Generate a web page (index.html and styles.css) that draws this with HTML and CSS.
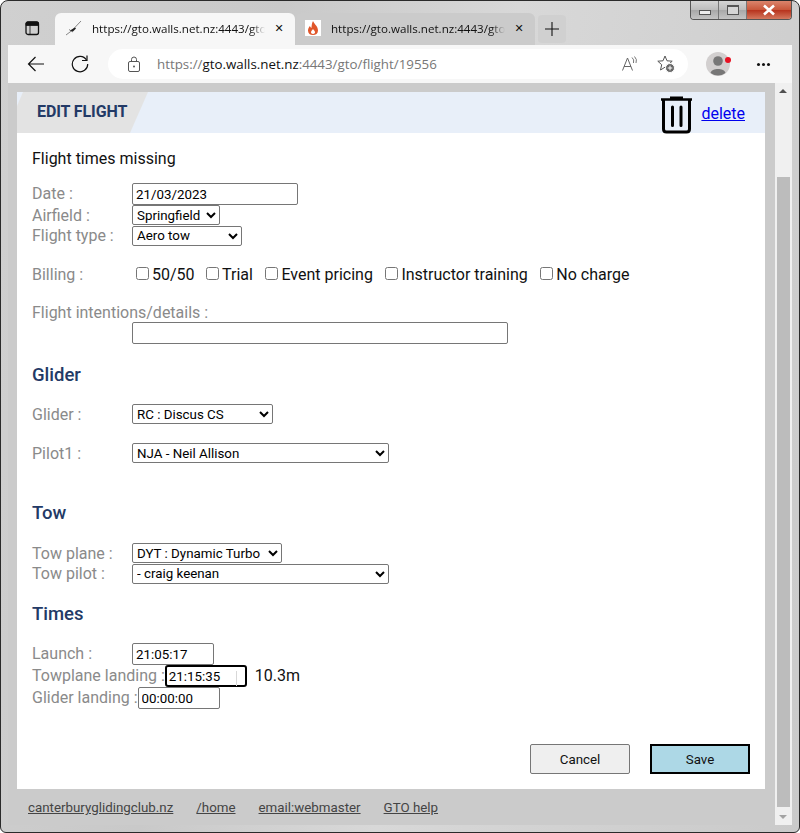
FILE: index.html
```html
<!DOCTYPE html>
<html lang="en">
<head>
    <meta charset="UTF-8">
    <title>Edit flight</title>
    <link rel="stylesheet" href="styles.css">
</head>
<body>
<div class="window">
    <div class="caption-btns">
        <span class="cap-btn"><i class="cap-min"></i></span>
        <span class="cap-btn"><i class="cap-max"></i></span>
        <span class="cap-btn cap-close">
            <svg width="16" height="12" viewBox="0 0 16 12"><path d="M3 1.500 L13 10.500 M13 1.500 L3 10.500" stroke="#fff" stroke-width="2.600" fill="none"/></svg>
        </span>
    </div>

    <div class="tabstrip">
        <span class="tab-toggle">
            <svg width="16" height="16" viewBox="0 0 16 16"><rect x="2" y="2" width="12.500" height="12.500" rx="2" fill="none" stroke="#111" stroke-width="1.300"/><path d="M2 3.500 Q2 2 3.500 2 H13 Q14.500 2 14.500 3.500 V5.500 H2 Z M6 5.500 V14" fill="#111" stroke="#111" stroke-width="0.800"/></svg>
        </span>
        <div class="tab tab-active">
            <svg class="favicon" width="18" height="18" viewBox="0 0 18 18"><path d="M1 16 L7 11.500 L16 2 M8 13 L4 10.500" stroke="#555" stroke-width="0.700" fill="none"/><path d="M5 11.500 L10 8.500 L11 9.500 L8 12.500 Z" fill="#222"/></svg>
            <span class="tab-title">https://gto.walls.net.nz:4443/gto/</span>
            <span class="tab-x">✕</span>
        </div>
        <div class="tab">
            <span class="favicon-box">
                <svg width="14" height="16" viewBox="0 0 14 16"><path d="M7 1 C8 4 12 6 12 10.500 C12 13.500 9.800 15 7 15 C4.200 15 2 13.500 2 10.500 C2 8.500 3 7 4 6 C4.300 7 4.700 7.500 5.500 8 C5.500 5.500 6 3 7 1 Z M7 9 C6 10.500 5 11 5 12.300 C5 13.300 6 14 7 14 C8 14 9 13.300 9 12.300 C9 11 8 10.500 7 9 Z" fill="#e0562a" fill-rule="evenodd"/></svg>
            </span>
            <span class="tab-title">https://gto.walls.net.nz:4443/gtoc</span>
            <span class="tab-x">✕</span>
        </div>
        <span class="tab-new">
            <svg width="14" height="14" viewBox="0 0 14 14"><path d="M7 0 V14 M0 7 H14" stroke="#111" stroke-width="1.100"/></svg>
        </span>
    </div>

    <div class="toolbar">
        <span class="tool-btn">
            <svg width="18" height="18" viewBox="0 0 18 18"><path d="M17 9 H1.500 M8.500 2 L1.500 9 L8.500 16" stroke="#111" stroke-width="1.200" fill="none"/></svg>
        </span>
        <span class="tool-btn">
            <svg width="18" height="18" viewBox="0 0 18 18"><path d="M15.500 5 A7.700 7.700 0 1 0 16.700 9" stroke="#111" stroke-width="1.200" fill="none"/><path d="M16 0.500 V5.500 H11" stroke="#111" stroke-width="1.200" fill="none"/></svg>
        </span>
        <div class="address">
            <svg class="lock" width="14" height="16" viewBox="0 0 14 16"><rect x="1.500" y="5.500" width="11" height="10" rx="1.500" fill="none" stroke="#555"/><path d="M4.500 5.500 V3.500 A2.500 2.500 0 0 1 9.500 3.500 V5.500" fill="none" stroke="#555"/><circle cx="7" cy="10.500" r="1" fill="#555"/></svg>
            <span class="url"><span class="url-dim">https://</span>gto.walls.net.nz<span class="url-dim">:4443/gto/flight/19556</span></span>
            <svg class="read-aloud" width="16" height="16" viewBox="0 0 16 16"><path d="M0.500 14.500 L5.500 2 L10.500 14.500 M2 10.500 H9" stroke="#666" stroke-width="1" fill="none"/><path d="M10 1.500 Q12.500 3.500 11.500 7 M12.500 0.500 Q15.500 3.500 14 7" stroke="#666" stroke-width="0.900" fill="none"/></svg>
            <svg class="fav-add" width="18" height="18" viewBox="0 0 18 18"><path d="M8 1 L10 5.800 L15.200 6.200 L11.300 9.700 L12.500 15 L8 12.200 L3.500 15 L4.700 9.700 L0.800 6.200 L6 5.800 Z" stroke="#555" fill="none" stroke-linejoin="round"/><circle cx="13" cy="13" r="4.500" fill="#666" stroke="#fff"/><path d="M13 10.700 V15.300 M10.700 13 H15.300" stroke="#fff"/></svg>
        </div>
        <span class="avatar">
            <svg width="24" height="24" viewBox="0 0 24 24"><circle cx="12" cy="12" r="12" fill="#d2cfcf"/><circle cx="12" cy="9" r="4.800" fill="#777"/><path d="M4.500 21 C5.500 15.500 18.500 15.500 19.500 21 Q12 26 4.500 21 Z" fill="#777"/></svg>
            <i class="avatar-dot"></i>
        </span>
        <span class="more"><i></i><i></i><i></i></span>
    </div>

    <div class="viewport">
        <div class="page">
            <div class="card">
                <div class="card-head">
                    <div class="head-tab">EDIT FLIGHT</div>
                    <div class="head-actions">
                        <svg class="trash" width="32" height="38" viewBox="0 0 32 38"><path d="M1 3.500 H32" stroke="#000" stroke-width="2.500"/><path d="M11 3 V1.500 H22 V3" stroke="#000" stroke-width="2" fill="#000"/><path d="M3.500 4 V33 Q3.500 36 6.500 36 H26.500 Q29.500 36 29.500 33 V4" stroke="#000" stroke-width="3" fill="none"/><path d="M12.500 11 V29.500 M21 11 V29.500" stroke="#000" stroke-width="3" stroke-linecap="round"/></svg>
                        <a class="delete-link" href="#">delete</a>
                    </div>
                </div>

                <form class="form">
                    <p class="status">Flight times missing</p>

                    <div class="row row-date"><label class="lbl">Date :</label><input class="field w-date" type="text" value="21/03/2023"></div>
                    <div class="row row-select"><label class="lbl">Airfield :</label><select class="pick w-airfield"><option>Springfield</option></select></div>
                    <div class="row row-select"><label class="lbl">Flight type :</label><select class="pick w-type"><option>Aero tow</option></select></div>

                    <div class="row billing">
                        <label class="lbl">Billing :</label>
                        <label class="check"><input type="checkbox">50/50</label>
                        <label class="check"><input type="checkbox">Trial</label>
                        <label class="check"><input type="checkbox">Event pricing</label>
                        <label class="check"><input type="checkbox">Instructor training</label>
                        <label class="check"><input type="checkbox">No charge</label>
                    </div>

                    <div class="intent-label"><label class="lbl">Flight intentions/details :</label></div>
                    <div class="row intent"><input class="field w-intent" type="text"></div>

                    <h3 class="section sec-glider">Glider</h3>
                    <div class="row row-glider"><label class="lbl">Glider :</label><select class="pick w-glider"><option>RC : Discus CS</option></select></div>
                    <div class="row row-pilot"><label class="lbl">Pilot1 :</label><select class="pick w-pilot"><option>NJA - Neil Allison</option></select></div>

                    <h3 class="section sec-tow">Tow</h3>
                    <div class="row row-select"><label class="lbl">Tow plane :</label><select class="pick w-plane"><option>DYT : Dynamic Turbo</option></select></div>
                    <div class="row row-select"><label class="lbl">Tow pilot :</label><select class="pick w-pilot"><option>- craig keenan</option></select></div>

                    <h3 class="section sec-times">Times</h3>
                    <div class="row row-time"><label class="lbl">Launch :</label><input class="field w-time" type="text" value="21:05:17"></div>
                    <div class="row row-time">
                        <label class="lbl">Towplane landing :</label>
                        <span class="focus-wrap">
                            <input class="field w-time is-focus" type="text" value="21:15:35">
                            <i class="ibeam"></i>
                        </span>
                        <span class="elapsed">10.3m</span>
                    </div>
                    <div class="row row-time"><label class="lbl">Glider landing :</label><input class="field w-time" type="text" value="00:00:00"></div>

                    <div class="actions">
                        <button type="button" class="btn">Cancel</button>
                        <button type="button" class="btn btn-save">Save</button>
                    </div>
                </form>
            </div>

            <div class="footer">
                <a href="#">canterburyglidingclub.nz</a>
                <a href="#">/home</a>
                <a href="#">email:webmaster</a>
                <a href="#">GTO help</a>
            </div>
        </div>

        <div class="scrollbar">
            <span class="arrow-up"></span>
            <div class="thumb"></div>
            <span class="arrow-down"></span>
        </div>
    </div>
</div>
</body>
</html>
```

FILE: styles.css
```css
* {
    box-sizing: border-box;
}

html, body {
    margin: 0;
    padding: 0;
    background-color: #fff;
}

body {
    font-family: Roboto, Arial, sans-serif;
}

.window {
    position: relative;
    width: 800px;
    height: 833px;
    padding: 12px 7px 7px 7px;
    border: 1px solid #2a2a2a;
    border-radius: 8px 8px 6px 6px;
    background: linear-gradient(100deg, #d0d0d0 0%, #c9c9c9 30%, #d8d8d8 55%, #cacaca 100%);
    display: flex;
    flex-direction: column;
    overflow: hidden;
}

/* caption buttons */
.caption-btns {
    position: absolute;
    top: -1px;
    right: 7px;
    width: 102px;
    height: 20px;
    display: flex;
    border: 1px solid #555;
    border-top: none;
    border-radius: 0 0 4px 4px;
    overflow: hidden;
}

.cap-btn {
    width: 28px;
    display: flex;
    align-items: center;
    justify-content: center;
    background: linear-gradient(#d8d8d8, #bdbdbd 50%, #a9a9a9 55%, #c4c4c4);
    border-right: 1px solid #777;
}

.cap-min {
    width: 12px;
    height: 5px;
    margin-top: 6px;
    background-color: #eee;
    border: 1px solid #555;
}

.cap-max {
    width: 12px;
    height: 10px;
    border: 1px solid #555;
    border-top-width: 2px;
    background-color: #d5d5d5;
}

.cap-close {
    flex: 1;
    border-right: none;
    background: linear-gradient(#dd8a72, #c9583c 50%, #b8351f 55%, #d4785e);
}

/* tabs */
.tabstrip {
    height: 32px;
    display: flex;
    align-items: flex-end;
    flex-shrink: 0;
}

.tab-toggle {
    width: 47px;
    height: 32px;
    display: flex;
    align-items: center;
    justify-content: center;
    padding-left: 1px;
    padding-bottom: 2px;
}

.tab {
    width: 239px;
    height: 32px;
    border-radius: 6px 6px 0 0;
    display: flex;
    align-items: center;
    padding: 0 9px 2px 9px;
    background-color: #cbcbcb;
    font-size: 12px;
    color: #111;
}

.tab-active {
    width: 240px;
    margin-right: 1px;
    background-color: #f7f7f7;
    padding-left: 10px;
}

.favicon {
    flex-shrink: 0;
    margin-right: 9px;
}

.favicon-box {
    flex-shrink: 0;
    width: 16px;
    height: 16px;
    margin-right: 10px;
    background-color: #fff;
    display: flex;
    align-items: center;
    justify-content: center;
}

.tab-title {
    flex: 1;
    min-width: 0;
    font-family: "Open Sans", Arial, sans-serif;
    font-size: 11.6px;
    white-space: nowrap;
    -webkit-mask-image: linear-gradient(to right, #000 92%, transparent 100%);
    mask-image: linear-gradient(to right, #000 92%, transparent 100%);
}

.tab-x {
    flex-shrink: 0;
    width: 14px;
    margin-left: 7px;
    font-family: "DejaVu Sans", sans-serif;
    font-size: 11px;
    text-align: center;
}

.tab-new {
    width: 28px;
    height: 28px;
    margin: 0 0 2px 3px;
    display: flex;
    align-items: center;
    justify-content: center;
    background-color: #d0d0d0;
    border-radius: 4px;
}

/* toolbar */
.toolbar {
    height: 38px;
    flex-shrink: 0;
    display: flex;
    align-items: center;
    background-color: #f7f7f7;
    padding-left: 6px;
}

.tool-btn {
    width: 44px;
    display: flex;
    justify-content: center;
}

.tool-btn + .tool-btn {
    margin-right: 6px;
}

.address {
    width: 580px;
    height: 30px;
    background-color: #fff;
    border-radius: 15px;
    display: flex;
    align-items: center;
    padding-left: 19px;
}

.lock {
    flex-shrink: 0;
}

.url {
    flex: 1;
    margin-left: 16px;
    font-family: "Open Sans", Arial, sans-serif;
    font-size: 13.33px;
    color: #111;
}

.url-dim {
    color: #777;
}

.read-aloud {
    margin-right: 19px;
}

.fav-add {
    margin-right: 13px;
}

.avatar {
    position: relative;
    width: 24px;
    height: 24px;
    margin-left: 18px;
}

.avatar-dot {
    position: absolute;
    top: 5px;
    right: -1px;
    width: 6px;
    height: 6px;
    border-radius: 50%;
    background-color: #e81123;
}

.more {
    display: flex;
    gap: 2px;
    margin-left: 27px;
}

.more i {
    width: 3px;
    height: 3px;
    border-radius: 50%;
    background-color: #111;
}

/* page */
.viewport {
    flex: 1;
    display: flex;
    min-height: 0;
}

.page {
    width: 767px;
    padding: 9px 10px 0 9px;
    background-color: #cbcbcb;
}

.card {
    height: 697px;
    background-color: #fff;
    display: flex;
    flex-direction: column;
}

.card-head {
    height: 41px;
    flex-shrink: 0;
    display: flex;
    justify-content: space-between;
    background-color: #e8eff9;
}

.head-tab {
    width: 131px;
    padding: 10px 0 0 20px;
    background-color: #e3e3e3;
    clip-path: polygon(6px 0, 100% 0, 113px 100%, 0 100%, 0 14px);
    font-size: 16px;
    font-weight: 700;
    letter-spacing: -0.1px;
    color: #233a66;
}

.head-actions {
    display: flex;
    align-items: flex-start;
    padding-right: 20px;
}

.trash {
    margin: 4px 9px 0 0;
}

.delete-link {
    margin-top: 12px;
    font-size: 16px;
    line-height: 19px;
    color: #0000ee;
}

.form {
    flex: 1;
    display: flex;
    flex-direction: column;
    padding: 0 15px;
    font-size: 16px;
}

.status {
    margin: 17px 0 15px 0;
    height: 18px;
    line-height: 18px;
    color: #111;
}

.row {
    display: flex;
    align-items: center;
}

.lbl {
    min-width: 100px;
    white-space: nowrap;
    color: #8a8a8a;
}

.row-date .lbl,
.row-time .lbl,
.elapsed {
    margin-top: -2px;
}

.field {
    height: 22px;
    padding: 0 3px;
    border: 1px solid #767676;
    border-radius: 2px;
    font-family: Roboto, Arial, sans-serif;
    font-size: 13.33px;
    color: #000;
    background-color: #fff;
    outline: none;
}

.pick {
    height: 20px;
    padding: 0;
    border: 1px solid #767676;
    border-radius: 2px;
    font-family: Roboto, Arial, sans-serif;
    font-size: 13.33px;
    color: #000;
    background-color: #fff;
}

.row-date {
    height: 22px;
}

.row-select {
    height: 20.5px;
}

.w-date { width: 166px; }
.w-airfield { width: 88px; }
.w-type { width: 110px; }
.w-intent { width: 376px; margin-left: 100px; }
.w-glider { width: 141px; }
.w-pilot { width: 257px; }
.w-plane { width: 150px; }
.w-time { width: 82px; }

.billing {
    margin-top: 18px;
    height: 20px;
}

.billing .lbl {
    margin-right: 4px;
}

.check {
    display: flex;
    align-items: center;
    margin-right: 12.5px;
    color: #111;
}

.lbl + .check {
    margin-right: 11.5px;
}

.check input {
    width: 13px;
    height: 13px;
    margin: -2px 3px 0 0;
}

.intent-label {
    margin-top: 19px;
    height: 20px;
    line-height: 20px;
}

.intent {
    margin-top: -1px;
}

.section {
    margin: 0;
    height: 22px;
    line-height: 22px;
    font-size: 18.5px;
    font-weight: 500;
    color: #233a66;
}

.sec-glider {
    margin-top: 20px;
}

.row-glider {
    margin-top: 18px;
    height: 20px;
}

.row-pilot {
    margin-top: 19px;
    height: 20px;
}

.sec-tow {
    margin-top: 39px;
}

.sec-tow + .row {
    margin-top: 19px;
}

.sec-times {
    margin-top: 19px;
}

.sec-times + .row {
    margin-top: 18px;
}

.row-time {
    height: 22px;
}

.focus-wrap {
    position: relative;
    display: flex;
}

.is-focus {
    border: 2px solid #000;
    border-radius: 3px;
    padding: 0 2px;
}

.ibeam {
    position: absolute;
    top: 6px;
    left: 71px;
    width: 1px;
    height: 15px;
    background-color: #d8d8d8;
}

.elapsed {
    margin-left: 8px;
    color: #111;
}

.actions {
    display: flex;
    justify-content: flex-end;
    gap: 20px;
    margin-top: 35px;
}

.btn {
    width: 100px;
    height: 30px;
    padding: 0;
    border: 1px solid #767676;
    border-radius: 2px;
    background-color: #efefef;
    font-family: Roboto, Arial, sans-serif;
    font-size: 13.33px;
    color: #111;
}

.btn-save {
    border: 2px solid #000;
    border-radius: 0;
    background-color: #add8e6;
}

.footer {
    display: flex;
    gap: 23px;
    padding: 11px 0 0 11px;
    font-size: 13.33px;
    line-height: 16px;
}

.footer a {
    color: #444;
}

/* scrollbar */
.scrollbar {
    position: relative;
    width: 17px;
    background-color: #f0f0f0;
}

.thumb {
    position: absolute;
    top: 94px;
    bottom: 18px;
    left: 2px;
    width: 13px;
    background-color: #bcbcbc;
}

.arrow-up, .arrow-down {
    position: absolute;
    left: 4px;
    width: 0;
    height: 0;
    border-left: 4px solid transparent;
    border-right: 4px solid transparent;
}

.arrow-up {
    top: 6px;
    border-bottom: 4px solid #505050;
}

.arrow-down {
    bottom: 6px;
    border-top: 4px solid #a3a3a3;
}
```
